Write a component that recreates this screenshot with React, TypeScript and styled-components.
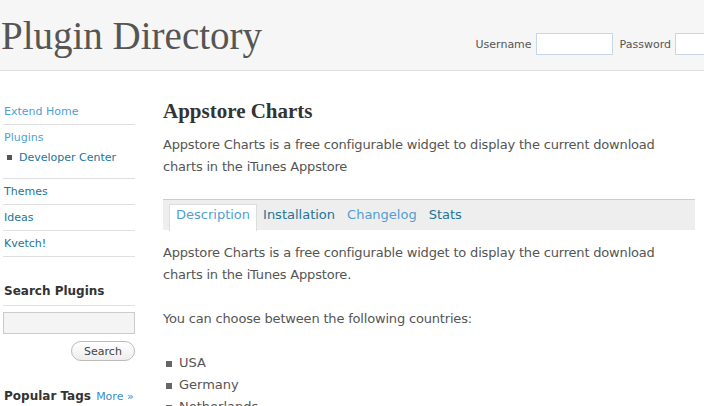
import styled, { createGlobalStyle } from 'styled-components';

const GlobalStyle = createGlobalStyle`
    html, body {
        margin: 0;
        padding: 0;
        background: #fff;
        overflow: hidden;
    }
    body {
        font-family: 'DejaVu Sans', Verdana, sans-serif;
        color: #555;
    }
`;

const sideLinks = [
    { label: 'Extend Home', visited: true },
    { label: 'Plugins', visited: true, children: ['Developer Center'] },
    { label: 'Themes' },
    { label: 'Ideas' },
    { label: 'Kvetch!' },
];

const tabs = [
    { label: 'Description', active: true, visited: true },
    { label: 'Installation' },
    { label: 'Changelog', visited: true },
    { label: 'Stats' },
];

const countries = ['USA', 'Germany', 'Netherlands', 'France'];

const App = () => {
    return (
        <Page>
            <GlobalStyle />
            <Header>
                <SiteTitle>Plugin Directory</SiteTitle>
                <LoginForm>
                    <LoginLabel>Username</LoginLabel>
                    <LoginInput type="text" />
                    <LoginLabel>Password</LoginLabel>
                    <LoginInput type="password" />
                </LoginForm>
            </Header>

            <Body>
                <Sidebar>
                    <NavList>
                        {sideLinks.map((item) => (
                            <NavItem key={item.label} $hasChildren={!!item.children}>
                                <Link $visited={item.visited}>{item.label}</Link>
                                {item.children && (
                                    <SubList>
                                        {item.children.map((child) => (
                                            <SubItem key={child}>
                                                <Link>{child}</Link>
                                            </SubItem>
                                        ))}
                                    </SubList>
                                )}
                            </NavItem>
                        ))}
                    </NavList>

                    <SideHeading $ruled $gap={25}>Search Plugins</SideHeading>
                    <SearchInput type="text" />
                    <ButtonRow>
                        <SearchButton>Search</SearchButton>
                    </ButtonRow>

                    <SideHeading $gap={26}>
                        Popular Tags <MoreLink>More »</MoreLink>
                    </SideHeading>
                </Sidebar>

                <Main>
                    <PluginTitle>Appstore Charts</PluginTitle>
                    <Text $last>
                        Appstore Charts is a free configurable widget to display the current download
                        charts in the iTunes Appstore
                    </Text>

                    <TabBar>
                        {tabs.map((tab) => (
                            <Tab key={tab.label} $active={tab.active} $visited={tab.visited}>
                                {tab.label}
                            </Tab>
                        ))}
                    </TabBar>

                    <Section>
                        <Text>
                            Appstore Charts is a free configurable widget to display the current
                            download charts in the iTunes Appstore.
                        </Text>
                        <Text>You can choose between the following countries:</Text>
                        <Bullets>
                            {countries.map((c) => (
                                <Bullet key={c}>{c}</Bullet>
                            ))}
                        </Bullets>
                    </Section>
                </Main>
            </Body>
        </Page>
    );
};

export default App;

// STYLES

const Page = styled.div`
    width: 760px;
`;

const Header = styled.header`
    display: flex;
    justify-content: space-between;
    height: 71px;
    padding: 14px 1px 0 1px;
    box-sizing: border-box;
    background: #f6f6f6;
    border-bottom: 1px solid #dedede;
`;

const SiteTitle = styled.h1`
    margin: 0;
    font-family: 'Liberation Serif', Georgia, serif;
    font-weight: normal;
    font-size: 39px;
    line-height: 44px;
    color: #555;
`;

const LoginForm = styled.form`
    display: flex;
    align-items: center;
    align-self: flex-start;
    margin-top: 19px;
    height: 22px;
`;

const LoginLabel = styled.label`
    font-size: 11px;
    color: #555;
    margin-right: 4px;
`;

const LoginInput = styled.input`
    width: 77px;
    height: 22px;
    box-sizing: border-box;
    border: 1px solid #c6d8e8;
    background: #fff;
    margin: 0 7px 0 0;
    padding: 0;
`;

const Body = styled.div`
    display: flex;
    gap: 28px;
    padding: 28px 0 0 3px;
`;

const Sidebar = styled.aside`
    width: 132px;
    flex-shrink: 0;
`;

const NavList = styled.ul`
    list-style: none;
    margin: 0;
    padding: 0;
`;

const NavItem = styled.li<{ $hasChildren?: boolean }>`
    padding: 5px 0 ${({ $hasChildren }) => ($hasChildren ? '13px' : '5px')} 1px;
    border-bottom: 1px solid #dfdfdf;
    font-size: 11px;
    line-height: 15px;
`;

const SubList = styled.ul`
    list-style: none;
    margin: 5px 0 0;
    padding: 0;
`;

const SubItem = styled.li`
    position: relative;
    padding-left: 15px;

    &::before {
        content: '';
        position: absolute;
        left: 3px;
        top: 5px;
        width: 5px;
        height: 5px;
        background: #555;
    }
`;

const Link = styled.a<{ $visited?: boolean }>`
    color: ${({ $visited }) => ($visited ? '#4f9fd4' : '#21759b')};
    text-decoration: none;
    cursor: pointer;
`;

const SideHeading = styled.h3<{ $ruled?: boolean; $gap?: number }>`
    margin: ${({ $gap }) => $gap ?? 26}px 0 0;
    padding-left: 1px;
    font-size: 12px;
    line-height: 18px;
    font-weight: bold;
    color: #333;
    white-space: nowrap;
    ${({ $ruled }) => $ruled && 'padding-bottom: 5px; border-bottom: 1px solid #dfdfdf;'}
`;

const MoreLink = styled.a`
    font-size: 11px;
    font-weight: normal;
    color: #3b8ccb;
    margin-left: 1px;
`;

const SearchInput = styled.input`
    display: block;
    width: 132px;
    height: 22px;
    box-sizing: border-box;
    margin: 6px 0 0;
    border: 1px solid #ccc;
    background: #f4f4f4;
`;

const ButtonRow = styled.div`
    display: flex;
    justify-content: flex-end;
    margin-top: 7px;
`;

const SearchButton = styled.button`
    width: 64px;
    height: 20px;
    padding: 0;
    border: 1px solid #bbb;
    border-radius: 10px;
    background: linear-gradient(#fff, #eee);
    font-family: 'DejaVu Sans', Verdana, sans-serif;
    font-size: 11px;
    color: #444;
`;

const Main = styled.main`
    width: 532px;
`;

const PluginTitle = styled.h2`
    margin: 0 0 11px;
    font-family: 'Liberation Serif', Georgia, serif;
    font-size: 21px;
    line-height: 24px;
    font-weight: bold;
    color: #333;
`;

const Text = styled.p<{ $last?: boolean }>`
    margin: 0 0 ${({ $last }) => ($last ? '21px' : '22px')};
    font-size: 13px;
    line-height: 22px;
    letter-spacing: -0.18px;
    color: #555;
`;

const TabBar = styled.nav`
    display: flex;
    align-items: flex-end;
    height: 30px;
    padding-left: 6px;
    background: #eee;
    border-top: 1px solid #ccc;
`;

const Tab = styled.a<{ $active?: boolean; $visited?: boolean }>`
    height: 25px;
    box-sizing: border-box;
    padding: 0 6px;
    font-size: 13px;
    line-height: 20px;
    color: ${({ $visited }) => ($visited ? '#4f9fd4' : '#21759b')};
    cursor: pointer;
    ${({ $active }) =>
        $active &&
        'background: #fff; border: 1px solid #ddd; border-bottom: none; margin-bottom: -1px; height: 27px;'}
`;

const Section = styled.div`
    padding-top: 12px;
`;

const Bullets = styled.ul`
    list-style: none;
    margin: 0;
    padding: 0;
`;

const Bullet = styled.li`
    position: relative;
    padding-left: 16px;
    font-size: 13px;
    line-height: 22px;
    color: #555;

    &::before {
        content: '';
        position: absolute;
        left: 3px;
        top: 9px;
        width: 6px;
        height: 6px;
        background: #666;
    }
`;
